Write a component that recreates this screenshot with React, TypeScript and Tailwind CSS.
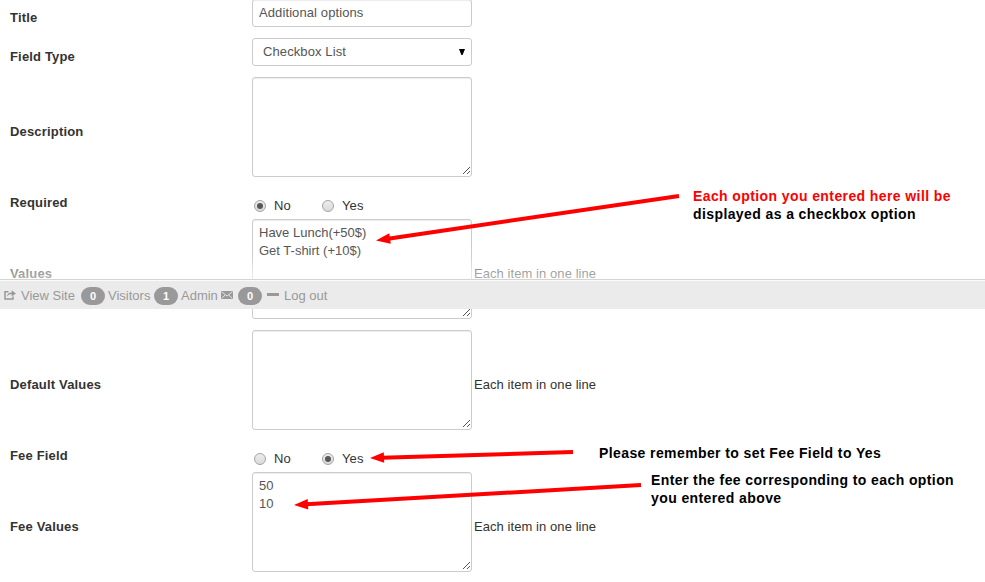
import type { ReactNode } from "react";

function Row({ label, height, help, children }: { label: string; height: string; help?: string; children: ReactNode }) {
  return (
    <div className={`flex shrink-0 items-center pl-[10px] ${height}`}>
      <div className="w-[242px] pb-[2px] text-[13px] leading-[18px] font-bold tracking-[0.17px]">{label}</div>
      <div className="h-full w-[220px]">{children}</div>
      {help && <div className="pb-[2px] pl-[2px] tracking-[0.07px]">{help}</div>}
    </div>
  );
}

function Area({ lines = [] }: { lines?: string[] }) {
  return (
    <div className="relative h-[100px] w-[220px] rounded-[3px] border border-[#ccc] bg-white px-[6px] py-[4px] text-[#555] shadow-[inset_0_1px_1px_rgba(0,0,0,0.075)]">
      {lines.map((line) => (
        <div key={line} className="leading-[18px]">{line}</div>
      ))}
      <svg className="absolute right-[1px] bottom-[1px] h-[8px] w-[8px]" viewBox="0 0 8 8" shapeRendering="crispEdges">
        <path d="M0.5 7.5L7.5 0.5M4.5 7.5L7.5 4.5" stroke="#555" strokeWidth="1" fill="none" />
      </svg>
    </div>
  );
}

function Radio({ checked }: { checked: boolean }) {
  return (
    <span className="flex h-[12px] w-[12px] items-center justify-center rounded-full border border-[#a4a4a4] bg-linear-to-b from-[#ededed] to-[#dadada]">
      {checked && <span className="h-[6px] w-[6px] rounded-full bg-[#575757]" />}
    </span>
  );
}

function Radios({ value }: { value: "No" | "Yes" }) {
  return (
    <div className="flex h-[31px] pt-[9px] pl-[2px]">
      {["No", "Yes"].map((option) => (
        <div key={option} className="flex w-[68px] items-start gap-[8px]">
          <span className="pt-[3px]">
            <Radio checked={option === value} />
          </span>
          <span className="leading-[18px] tracking-[0.1px]">{option}</span>
        </div>
      ))}
    </div>
  );
}

function Badge({ children }: { children: ReactNode }) {
  return (
    <span className="flex h-[18px] w-[24px] items-center justify-center rounded-[9px] bg-[#999] text-[11px] font-bold text-white">
      {children}
    </span>
  );
}

function StatusBar() {
  return (
    <div className="absolute top-[279px] left-0 flex h-[30px] w-full items-center border-t border-[#d4d4d4] bg-[#ebebeb] pt-[3px] pl-[4px] text-[12px] text-[#999] shadow-[inset_0_1px_0_rgba(255,255,255,0.8),0_-15px_15px_rgba(255,255,255,0.6)]">
      <svg className="mb-[2px] h-[10px] w-[12px]" viewBox="0 0 12 10">
        <path d="M4.5 1.7H1V9H9V6.5" fill="none" stroke="#999" strokeWidth="1.5" />
        <path d="M3 6.5C3.2 3.8 5 2.4 7.7 2.4V0.2L11.9 3.4L7.7 6.5V4.3C5.7 4.2 4.2 4.8 3 6.5Z" fill="#999" />
      </svg>
      <span className="ml-[5px] w-[60px] text-[13px]">View Site</span>
      <Badge>0</Badge>
      <span className="ml-[3px] w-[46px] text-[13px]">Visitors</span>
      <Badge>1</Badge>
      <span className="ml-[3px] w-[40px] text-[13px]">Admin</span>
      <svg className="mr-[5px] mb-[2px] h-[8px] w-[12px]" viewBox="0 0 12 8">
        <rect width="12" height="8" fill="#999" />
        <path d="M0.5 0.7L6 5L11.5 0.7M0.7 7.3L4.2 4M11.3 7.3L7.8 4" fill="none" stroke="#ebebeb" strokeWidth="0.9" />
      </svg>
      <Badge>0</Badge>
      <span className="mr-[5px] mb-[3px] ml-[5px] h-[3px] w-[12px] bg-[#999]" />
      <span className="text-[13px]">Log out</span>
    </div>
  );
}

function Arrows() {
  return (
    <svg className="absolute inset-0 h-[582px] w-[985px]" viewBox="0 0 985 582">
      <g stroke="#f00" strokeWidth="4" fill="#f00">
        <path d="M679 196L388 238.7" />
        <path d="M376 240.5L389.3 233.3L390.8 243.7Z" stroke="none" />
        <path d="M573 452L382 457.7" />
        <path d="M370 458L383.8 452.3L384.2 462.8Z" stroke="none" />
        <path d="M641 485L306 504.3" />
        <path d="M294 505L307.7 499L308.3 509.5Z" stroke="none" />
      </g>
    </svg>
  );
}

export default function App() {
  return (
    <div className="relative h-[582px] w-[985px] overflow-hidden bg-white font-['Liberation_Sans',Arial,sans-serif] text-[13px] leading-[18px] text-[#333]">
      <div className="-mt-px flex flex-col">
        <Row label="Title" height="h-[39px]">
          <div className="h-[28px] rounded-[3px] border border-[#ccc] px-[6px] py-[4px] tracking-[0.1px] text-[#555] shadow-[inset_0_1px_1px_rgba(0,0,0,0.075)]">
            Additional options
          </div>
        </Row>
        <Row label="Field Type" height="h-[39px]">
          <div className="flex h-[28px] items-center justify-between rounded-[3px] border border-[#ccc] pr-[6px] pl-[10px] tracking-[0.1px] text-[#555]">
            <span>Checkbox List</span>
            <svg className="h-[6px] w-[6px]" viewBox="0 0 6 6">
              <path d="M0 0H6L3.6 6H2.4Z" fill="#000" />
            </svg>
          </div>
        </Row>
        <Row label="Description" height="h-[111px]">
          <Area />
        </Row>
        <Row label="Required" height="h-[31px]">
          <Radios value="No" />
        </Row>
        <Row label="Values" height="h-[111px]" help="Each item in one line">
          <Area lines={["Have Lunch(+50$)", "Get T-shirt (+10$)"]} />
        </Row>
        <Row label="Default Values" height="h-[111px]" help="Each item in one line">
          <Area />
        </Row>
        <Row label="Fee Field" height="h-[31px]">
          <Radios value="Yes" />
        </Row>
        <Row label="Fee Values" height="h-[111px]" help="Each item in one line">
          <Area lines={["50", "10"]} />
        </Row>
      </div>
      <StatusBar />
      <Arrows />
      <div className="absolute top-[187px] left-[693px] text-[14px] leading-[18px] font-bold tracking-[0.4px] whitespace-nowrap text-black">
        <div className="text-[#f00]">Each option you entered here will be</div>
        <div>displayed as a checkbox option</div>
      </div>
      <div className="absolute top-[444px] left-[599px] text-[14px] leading-[18px] font-bold tracking-[0.4px] whitespace-nowrap text-black">
        Please remember to set Fee Field to Yes
      </div>
      <div className="absolute top-[471px] left-[651px] text-[14px] leading-[18px] font-bold tracking-[0.4px] whitespace-nowrap text-black">
        <div>Enter the fee corresponding to each option</div>
        <div>you entered above</div>
      </div>
    </div>
  );
}
